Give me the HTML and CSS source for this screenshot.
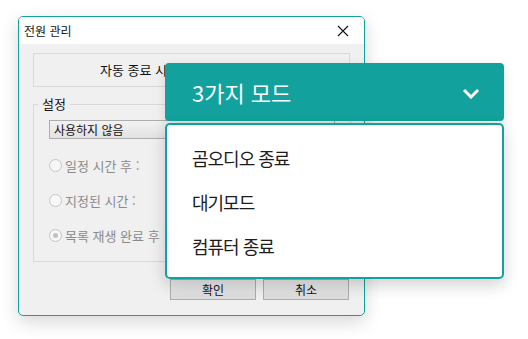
FILE: index.html
```html
<!DOCTYPE html>
<html lang="ko">
<head>
    <meta charset="UTF-8">
    <meta name="viewport" content="width=device-width, initial-scale=1.0">
    <title>전원 관리</title>
    <link rel="stylesheet" href="styles.css">
</head>
<body>
    <div class="stage">
        <!-- Windows style dialog -->
        <div class="dialog">
            <div class="titlebar">
                <span class="title">전원 관리</span>
                <svg class="close" width="12" height="12" viewBox="0 0 12 12">
                    <path d="M1 1 L11 11 M11 1 L1 11" stroke="#111" stroke-width="1.1" fill="none"/>
                </svg>
            </div>
            <div class="dialog-body">
                <div class="group info">자동 종료 시간을 설정합니다</div>

                <fieldset class="group settings">
                    <legend>설정</legend>
                    <div class="select">사용하지 않음</div>
                    <div class="radio"><span class="dot"></span>일정 시간 후 :</div>
                    <div class="radio"><span class="dot"></span>지정된 시간 :</div>
                    <div class="radio"><span class="dot checked"></span>목록 재생 완료 후</div>
                </fieldset>

                <div class="buttons">
                    <button class="btn">확인</button>
                    <button class="btn">취소</button>
                </div>
            </div>
        </div>

        <!-- Mode dropdown -->
        <div class="dropdown">
            <div class="dropdown-head">
                <span>3가지 모드</span>
                <svg width="18" height="11" viewBox="0 0 18 11">
                    <path d="M2 2 L9 9 L16 2" stroke="#fff" stroke-width="3" fill="none"/>
                </svg>
            </div>
            <ul class="dropdown-menu">
                <li>곰오디오 종료</li>
                <li>대기모드</li>
                <li>컴퓨터 종료</li>
            </ul>
        </div>
    </div>
</body>
</html>
```

FILE: styles.css
```css
body {
    margin: 0;
    background: #fff;
    font-family: 'Noto Sans CJK KR', 'Noto Sans', sans-serif;
    color: #111;
}
.stage {
    position: relative;
    width: 528px;
    height: 339px;
    overflow: hidden;
}
.dialog {
    margin: 16px 0 0 18px;
    width: 345px;
    height: 298px;
    border: 1px solid #13a19d;
    border-radius: 5px;
    background: #f0f0f0;
    box-shadow: 0 6px 18px rgba(0, 0, 0, 0.16);
    overflow: hidden;
}
.titlebar {
    height: 27px;
    background: #fff;
    display: flex;
    align-items: center;
    justify-content: space-between;
    padding: 0 15px 0 5px;
    font-size: 12px;
}
.close {
    display: block;
}
.dialog-body {
    padding: 9px 14px 0 14px;
}
.group {
    border: 1px solid #d9d9d9;
    margin: 0;
}
.info {
    height: 32px;
    line-height: 32px;
    padding-left: 66px;
    font-size: 13px;
    color: #111;
}
.settings {
    margin-top: 10px;
    height: 165px;
    padding: 8px 15px 0 15px;
    box-sizing: border-box;
}
.settings legend {
    font-size: 13px;
    padding: 0 4px;
    margin-left: -11px;
    line-height: 14px;
}
.select {
    width: 280px;
    height: 17px;
    line-height: 17px;
    border: 1px solid #adadad;
    background: linear-gradient(#f2f2f2, #e2e2e2);
    font-size: 12px;
    padding-left: 4px;
    margin: 1px 0 9px 0;
}
.radio {
    display: flex;
    align-items: center;
    gap: 3px;
    font-size: 13px;
    color: #8a8a8a;
    height: 35px;
}
.dot {
    width: 11px;
    height: 11px;
    border: 1px solid #c4c4c4;
    border-radius: 50%;
    background: #f7f7f7;
    position: relative;
}
.dot.checked::after {
    content: '';
    position: absolute;
    left: 3px;
    top: 3px;
    width: 5px;
    height: 5px;
    border-radius: 50%;
    background: #c2c2c2;
}
.buttons {
    display: flex;
    justify-content: flex-end;
    gap: 7px;
    margin-top: 17px;
    padding-right: 1px;
}
.btn {
    width: 86px;
    height: 21px;
    border: 1px solid #adadad;
    background: linear-gradient(#e9e9e9, #dcdcdc);
    font-family: 'Noto Sans CJK KR', sans-serif;
    font-size: 12px;
    color: #111;
    padding: 0;
}
.dropdown {
    position: absolute;
    left: 165px;
    top: 63px;
    width: 339px;
}
.dropdown-head {
    height: 58px;
    background: #13a19d;
    border-radius: 4px;
    display: flex;
    align-items: center;
    justify-content: space-between;
    padding: 0 24px 0 27px;
    color: #fff;
    font-size: 22px;
    box-shadow: 0 4px 12px rgba(0, 0, 0, 0.12);
}
.dropdown-head svg {
    display: block;
    margin-top: 2px;
}
.dropdown-menu {
    list-style: none;
    margin: 2px 0 0 0;
    padding: 11px 0 0 25px;
    height: 156px;
    box-sizing: border-box;
    background: #fff;
    border: 2px solid #13a19d;
    border-radius: 5px;
    box-shadow: 0 6px 16px rgba(0, 0, 0, 0.18);
}
.dropdown-menu li {
    font-size: 18px;
    letter-spacing: -1px;
    color: #1c1c1c;
    height: 44px;
    line-height: 44px;
}
```
